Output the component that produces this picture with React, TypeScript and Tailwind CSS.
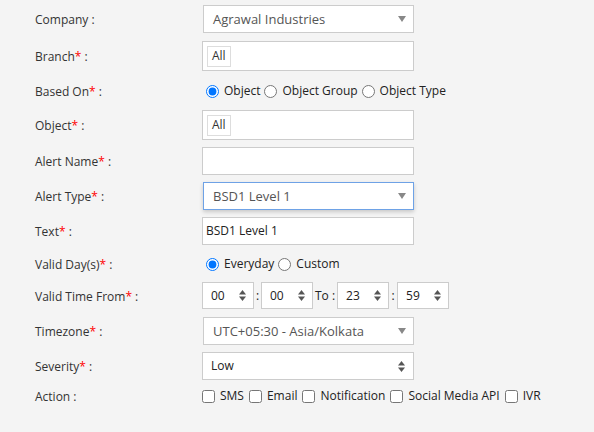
const font = { fontFamily: '"Open Sans", "Noto Sans", sans-serif' };

function Caret() {
    return (
        <svg width="8" height="6" viewBox="0 0 8 6" className="shrink-0">
            <path d="M0 0 L8 0 L4 6 Z" fill="#888" />
        </svg>
    );
}

function Spin() {
    return (
        <svg width="7" height="11" viewBox="0 0 7 11" className="shrink-0">
            <path d="M3.5 0 L7 4.5 L0 4.5 Z" fill="#555" />
            <path d="M0 6.5 L7 6.5 L3.5 11 Z" fill="#555" />
        </svg>
    );
}

function Label({ text, req }: { text: string; req?: boolean }) {
    return (
        <div className="w-[167px] shrink-0 pt-[2px] text-[12px] text-[#333]">
            {text}
            {req && <span className="text-[#f00]">*</span>} :
        </div>
    );
}

function Row({ label, req, mt, h, children }: { label: string; req?: boolean; mt: string; h: string; children: React.ReactNode }) {
    return (
        <div className={`flex items-center pl-[35px] ${mt} ${h}`}>
            <Label text={label} req={req} />
            {children}
        </div>
    );
}

function Select({ value, focused }: { value: string; focused?: boolean }) {
    return (
        <div
            className={
                'flex h-full w-[211px] items-center justify-between bg-white pl-[9px] pr-[7px] text-[13px] text-[#555] ' +
                (focused ? 'border border-[#6ea2e6] shadow-[0_2px_4px_rgba(0,0,0,0.18)]' : 'border border-[#ccc]')
            }
        >
            <span className="pt-[2px]">{value}</span>
            <Caret />
        </div>
    );
}

function TagBox() {
    return (
        <div className="flex h-full w-[212px] items-center border border-[#ccc] bg-white pl-[4px]">
            <span className="flex h-[21px] items-center border border-[#ddd] px-[4px] text-[12px] text-[#333]">All</span>
        </div>
    );
}

function NumBox({ value }: { value: string }) {
    return (
        <div className="flex h-full w-[52px] items-center justify-between border border-[#ccc] bg-white pl-[8px] pr-[7px] text-[12px] text-[#222]">
            <span>{value}</span>
            <Spin />
        </div>
    );
}

function Radio({ label, checked, name }: { label: string; checked?: boolean; name: string }) {
    return (
        <label className="flex items-center text-[12px] text-[#222]">
            <input type="radio" name={name} defaultChecked={checked} className="m-0 ml-[4px] mr-[5px] h-[13px] w-[13px] accent-[#0075ff]" />
            {label}
        </label>
    );
}

function Check({ label }: { label: string }) {
    return (
        <label className="flex items-center gap-[5px] text-[12px] text-[#222]">
            <input type="checkbox" className="m-0 h-[13px] w-[13px]" />
            {label}
        </label>
    );
}

export default function App() {
    return (
        <div className="h-[432px] w-[594px] overflow-hidden bg-[#f4f4f4]" style={font}>
            <div className="flex flex-col pt-[5px]">
                <Row label="Company" mt="" h="h-[28px]">
                    <div className="ml-[1px] h-full">
                        <Select value="Agrawal Industries" />
                    </div>
                </Row>
                <Row label="Branch" req mt="mt-[8px]" h="h-[30px]">
                    <TagBox />
                </Row>
                <Row label="Based On" req mt="mt-[10px]" h="h-[20px]">
                    <div className="flex items-center">
                        <Radio name="based" label="Object" checked />
                        <Radio name="based" label="Object Group" />
                        <Radio name="based" label="Object Type" />
                    </div>
                </Row>
                <Row label="Object" req mt="mt-[9px]" h="h-[30px]">
                    <TagBox />
                </Row>
                <Row label="Alert Name" req mt="mt-[7px]" h="h-[28px]">
                    <div className="h-full w-[212px] border border-[#ccc] bg-white" />
                </Row>
                <Row label="Alert Type" req mt="mt-[7px]" h="h-[28px]">
                    <div className="ml-[1px] h-full">
                        <Select value="BSD1 Level 1" focused />
                    </div>
                </Row>
                <Row label="Text" req mt="mt-[7px]" h="h-[28px]">
                    <div className="flex h-full w-[212px] items-center border border-[#ccc] bg-white pl-[3px] text-[12px] text-[#222]">
                        BSD1 Level 1
                    </div>
                </Row>
                <Row label="Valid Day(s)" req mt="mt-[9px]" h="h-[20px]">
                    <div className="flex items-center">
                        <Radio name="day" label="Everyday" checked />
                        <Radio name="day" label="Custom" />
                    </div>
                </Row>
                <Row label="Valid Time From" req mt="mt-[8px]" h="h-[27px]">
                    <div className="flex h-full items-center text-[12px] text-[#222]">
                        <NumBox value="00" />
                        <span className="w-[7px] text-center">:</span>
                        <NumBox value="00" />
                        <span className="px-[2px]">To :</span>
                        <NumBox value="23" />
                        <span className="w-[8px] text-center">:</span>
                        <NumBox value="59" />
                    </div>
                </Row>
                <Row label="Timezone" req mt="mt-[8px]" h="h-[28px]">
                    <div className="ml-[1px] h-full">
                        <Select value="UTC+05:30 - Asia/Kolkata" />
                    </div>
                </Row>
                <Row label="Severity" req mt="mt-[7px]" h="h-[28px]">
                    <div className="flex h-full w-[212px] items-center justify-between border border-[#ccc] bg-white pl-[8px] pr-[8px] text-[12px] text-[#222]">
                        <span>Low</span>
                        <Spin />
                    </div>
                </Row>
                <Row label="Action" mt="mt-[6px]" h="h-[20px]">
                    <div className="flex items-center gap-[5px]">
                        <Check label="SMS" />
                        <Check label="Email" />
                        <Check label="Notification" />
                        <Check label="Social Media API" />
                        <Check label="IVR" />
                    </div>
                </Row>
            </div>
        </div>
    );
}
